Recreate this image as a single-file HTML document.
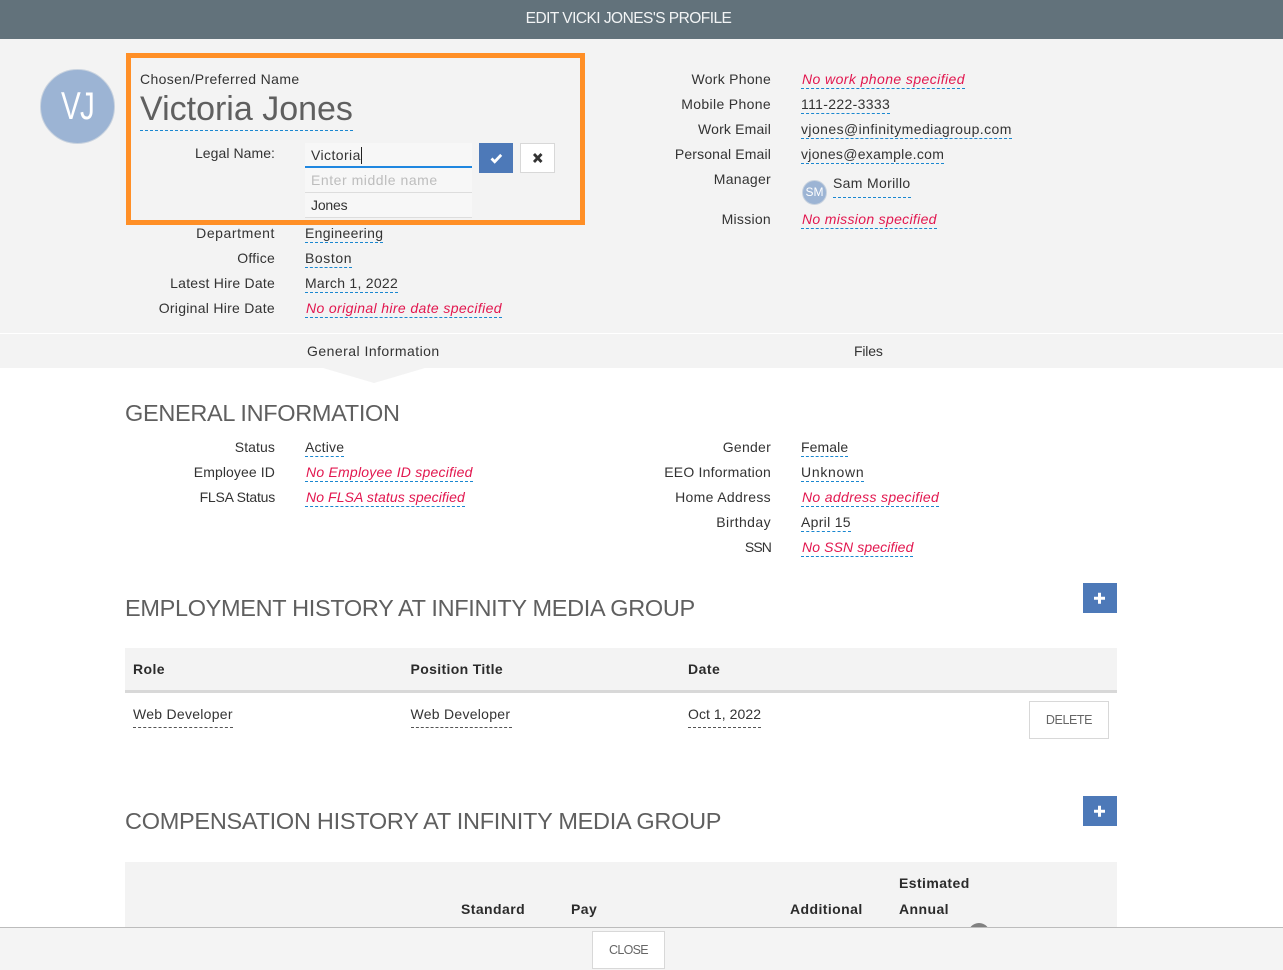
<!DOCTYPE html>
<html><head><meta charset="utf-8"><title>Edit Vicki Jones's Profile</title>
<style>
html,body{margin:0;padding:0;background:#fff;width:1283px;height:970px;overflow:hidden}
body{position:relative;font-family:"Liberation Sans",Arial,sans-serif;font-size:14px;color:#333;letter-spacing:.42px}
div,span{position:absolute;white-space:nowrap;box-sizing:border-box}
.l{height:20px;line-height:20px;text-align:right;width:260px}
.a{left:15px}
.b{left:511px}
.v{height:20px;line-height:20px;border-bottom:1px dashed #1a87d0}
.x{left:305px}
.y{left:801px}
.r{color:#e2174f;font-style:italic;padding-left:1px}
.h{left:125px;font-size:23.5px;line-height:30px;height:30px;color:#5f5f5f;letter-spacing:-.32px}
.p{width:34px;height:30px;background:#4d79b8;left:1083px}
.th{font-weight:bold;height:20px;line-height:20px;color:#2b2b2b}
.td{height:24px;line-height:20px;border-bottom:1px dashed #555}
.f{left:305px;width:167px;height:25px;background:#f7f7f7;line-height:24px;padding-left:6px}
</style></head><body>

<div style="left:0;top:0;width:1283px;height:333px;background:#f3f3f3"></div>
<div style="left:0;top:334px;width:1283px;height:34px;background:#f3f3f3"></div>
<div style="left:0;top:0;width:1283px;height:39px;background:#62727b"></div>
<div style="left:0;top:0;width:1257px;height:39px;color:#f2f4f5;font-size:15.5px;line-height:37px;text-align:center;letter-spacing:-.54px">EDIT VICKI JONES'S PROFILE</div>

<div style="left:40px;top:69px;width:75px;height:75px;border-radius:50%;background:#9cb4d4;border:1px solid #c9d3df"></div>
<div style="left:40px;top:69px;width:75px;height:75px;color:#fff;font-size:39px;line-height:76px;text-align:center;letter-spacing:-1px;transform:scaleX(.76)">VJ</div>

<div style="left:126px;top:53px;width:459px;height:172px;border:5px solid #ff8f26"></div>
<div style="left:140px;top:69px;height:20px;line-height:20px;letter-spacing:.37px">Chosen/Preferred Name</div>
<div style="left:140px;top:86px;height:45px;line-height:46px;font-size:34px;color:#5f5f5f;letter-spacing:0;border-bottom:1px dashed #1a87d0">Victoria Jones</div>
<div class="l a" style="top:143px;letter-spacing:.06px">Legal Name:</div>

<div class="f" style="top:143px;height:25px;border-bottom:2px solid #1f87e0">Victoria<span style="position:static;border-left:1px solid #222;margin-left:0;font-size:15px"></span></div>
<div class="f" style="top:168px;border-bottom:1px solid #ddd;color:#bdbdbd;letter-spacing:.54px">Enter middle name</div>
<div class="f" style="top:193px;border-bottom:1px solid #ddd;letter-spacing:-.18px">Jones</div>

<div style="left:479px;top:143px;width:34px;height:30px;background:#4d79b8">
<svg width="34" height="30" viewBox="0 0 34 30" style="display:block"><path d="M12.500 15.500l3.200 3.200 6.500-6.800" fill="none" stroke="#fff" stroke-width="2.800"/></svg></div>
<div style="left:520px;top:143px;width:35px;height:30px;background:#fff;border:1px solid #d8d8d8">
<svg width="33" height="28" viewBox="0 0 33 28" style="display:block"><path d="M13 10l7.500 8M20.500 10l-7.500 8" fill="none" stroke="#333" stroke-width="2.800"/></svg></div>

<div class="l a" style="top:223px;letter-spacing:.57px">Department</div><div class="v x" style="top:223px;letter-spacing:.33px">Engineering</div>
<div class="l a" style="top:248px;letter-spacing:.25px">Office</div><div class="v x" style="top:248px;letter-spacing:.59px">Boston</div>
<div class="l a" style="top:273px;letter-spacing:.23px">Latest Hire Date</div><div class="v x" style="top:273px;letter-spacing:.27px">March 1, 2022</div>
<div class="l a" style="top:298px;letter-spacing:.28px">Original Hire Date</div><div class="v x r" style="top:298px;letter-spacing:.37px">No original hire date specified</div>

<div class="l b" style="top:69px;letter-spacing:.27px">Work Phone</div><div class="v y r" style="top:69px">No work phone specified</div>
<div class="l b" style="top:94px;letter-spacing:.34px">Mobile Phone</div><div class="v y" style="top:94px;letter-spacing:.34px">111-222-3333</div>
<div class="l b" style="top:119px;letter-spacing:.17px">Work Email</div><div class="v y" style="top:119px">vjones@infinitymediagroup.com</div>
<div class="l b" style="top:144px;letter-spacing:.14px">Personal Email</div><div class="v y" style="top:144px;letter-spacing:.29px">vjones@example.com</div>
<div class="l b" style="top:169px;letter-spacing:.28px">Manager</div>
<div style="left:802px;top:180px;width:25px;height:25px;border-radius:50%;background:#9cb4d4;border:1px solid #c9d3df;color:#fff;font-size:12px;line-height:23px;text-align:center;letter-spacing:0">SM</div>
<div class="v" style="left:833px;top:173px;height:25px;letter-spacing:.33px">Sam Morillo</div>
<div class="l b" style="top:209px;letter-spacing:.28px">Mission</div><div class="v y r" style="top:209px;letter-spacing:.32px">No mission specified</div>

<div style="left:307px;top:341px;height:20px;line-height:20px;letter-spacing:.47px">General Information</div>
<div style="left:854px;top:341px;height:20px;line-height:20px;letter-spacing:-.18px">Files</div>
<svg width="1283" height="16" viewBox="0 0 1283 16" style="position:absolute;left:0;top:368px"><path d="M323 0H425L374 15Z" fill="#f3f3f3"/></svg>

<div class="h" style="top:398px">GENERAL INFORMATION</div>
<div class="l a" style="top:437px;letter-spacing:.09px">Status</div><div class="v x" style="top:437px;letter-spacing:.17px">Active</div>
<div class="l a" style="top:462px;letter-spacing:.1px">Employee ID</div><div class="v x r" style="top:462px;letter-spacing:.23px">No Employee ID specified</div>
<div class="l a" style="top:487px;letter-spacing:-.22px">FLSA Status</div><div class="v x r" style="top:487px;letter-spacing:.09px">No FLSA status specified</div>
<div class="l b" style="top:437px;letter-spacing:.25px">Gender</div><div class="v y" style="top:437px;letter-spacing:.09px">Female</div>
<div class="l b" style="top:462px;letter-spacing:.22px">EEO Information</div><div class="v y" style="top:462px;letter-spacing:.71px">Unknown</div>
<div class="l b" style="top:487px;letter-spacing:.34px">Home Address</div><div class="v y r" style="top:487px;letter-spacing:.32px">No address specified</div>
<div class="l b" style="top:512px">Birthday</div><div class="v y" style="top:512px;letter-spacing:.3px">April 15</div>
<div class="l b" style="top:537px;letter-spacing:-.9px">SSN</div><div class="v y r" style="top:537px;letter-spacing:.11px">No SSN specified</div>

<div class="h" style="top:593px">EMPLOYMENT HISTORY AT INFINITY MEDIA GROUP</div>
<div class="p" style="top:583px"><svg width="34" height="30" viewBox="0 0 34 30" style="display:block"><path d="M16.500 9.700v11M11 15.200h11" stroke="#fff" stroke-width="3" fill="none"/></svg></div>

<div style="left:125px;top:648px;width:992px;height:45px;background:#f3f3f3;border-bottom:3px solid #d8d8d8"></div>
<div class="th" style="left:133px;top:659px">Role</div>
<div class="th" style="left:410.500px;top:659px;letter-spacing:.35px">Position Title</div>
<div class="th" style="left:688px;top:659px;letter-spacing:.5px">Date</div>
<div class="td" style="left:133px;top:704px;width:100px;letter-spacing:.27px">Web Developer</div>
<div class="td" style="left:410.500px;top:704px;width:101px;letter-spacing:.27px">Web Developer</div>
<div class="td" style="left:688px;top:704px;width:73px;letter-spacing:.06px">Oct 1, 2022</div>
<div style="left:1029px;top:701px;width:80px;height:38px;border:1px solid #d8d8d8;background:#fff;color:#666;font-size:12.500px;line-height:36px;text-align:center;letter-spacing:-.4px">DELETE</div>

<div class="h" style="top:806px;letter-spacing:-.27px">COMPENSATION HISTORY AT INFINITY MEDIA GROUP</div>
<div class="p" style="top:796px"><svg width="34" height="30" viewBox="0 0 34 30" style="display:block"><path d="M16.500 9.700v11M11 15.200h11" stroke="#fff" stroke-width="3" fill="none"/></svg></div>

<div style="left:125px;top:862px;width:992px;height:70px;background:#f3f3f3"></div>
<div class="th" style="left:899px;top:873px">Estimated</div>
<div class="th" style="left:461px;top:899px">Standard</div>
<div class="th" style="left:571px;top:899px">Pay</div>
<div class="th" style="left:790px;top:899px">Additional</div>
<div class="th" style="left:899px;top:899px">Annual</div>
<div style="left:968px;top:923px;width:22px;height:22px;border-radius:50%;background:#808080"></div>

<div style="left:0;top:927px;width:1283px;height:43px;background:#f4f4f4;border-top:1px solid #bcbcbc"></div>
<div style="left:592px;top:931px;width:73px;height:38px;background:#fff;border:1px solid #d8d8d8;color:#666;font-size:12.500px;line-height:36px;text-align:center;letter-spacing:-.7px">CLOSE</div>

</body></html>
